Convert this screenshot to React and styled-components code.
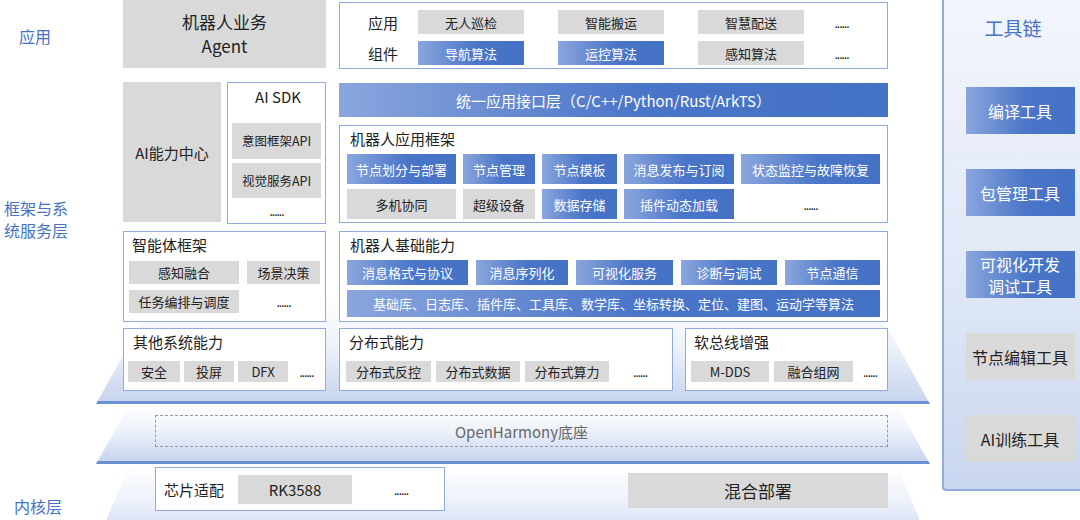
import React from "react";
import styled, { createGlobalStyle, css } from "styled-components";

const Global = createGlobalStyle`
  html, body { margin: 0; background: #fff; }
  body { font-family: "Noto Sans CJK SC", "Noto Sans", sans-serif; color: #222; }
`;

const blue = css`
  background: linear-gradient(90deg, #8aa6dd 0%, #4a75c8 55%, #4472c4 100%);
  color: #fff;
`;

const Canvas = styled.div`
  position: relative;
  width: 1080px;
  height: 520px;
  overflow: hidden;
`;

const Layer = styled.div`
  position: absolute;
  left: ${(p) => p.x}px;
  top: ${(p) => p.y}px;
  width: ${(p) => p.w}px;
  height: ${(p) => p.h}px;
`;

const Platform = styled(Layer)`
  background: linear-gradient(180deg, rgba(255, 255, 255, 0) 0%, #eef2fb 45%, #c8d5ef 100%);
  clip-path: polygon(${(p) => p.inset}px 0, calc(100% - ${(p) => p.inset}px) 0, 100% 100%, 0 100%);
  border-bottom: ${(p) => (p.line ? "3px solid #6d8fd3" : "none")};
  box-sizing: border-box;
`;

const SideLabel = styled(Layer)`
  color: #4472c4;
  font-size: 16px;
  line-height: 22px;
  text-align: center;
`;

const GrayBlock = styled(Layer)`
  background: #d9d9d9;
  display: flex;
  flex-direction: column;
  align-items: center;
  justify-content: center;
  font-size: ${(p) => p.fs || 16}px;
  line-height: 1.4;
`;

const Panel = styled(Layer)`
  box-sizing: border-box;
  background: #fff;
  border: 1.5px solid #8faadc;
  padding: ${(p) => p.pad || "4px 6px"};
  display: flex;
  flex-direction: column;
  gap: ${(p) => p.gap || 5}px;
`;

const Title = styled.div`
  font-size: 15px;
  line-height: 20px;
  padding-left: ${(p) => p.indent || 3}px;
  text-align: ${(p) => (p.center ? "center" : "left")};
`;

const Row = styled.div`
  display: flex;
  gap: ${(p) => p.gap || 6}px;
  align-items: center;
`;

const Chip = styled.div`
  flex: ${(p) => (p.w ? `0 0 ${p.w}px` : 1)};
  height: ${(p) => p.h || 24}px;
  display: flex;
  align-items: center;
  justify-content: center;
  font-size: ${(p) => p.fs || 13}px;
  white-space: nowrap;
  ${(p) => (p.blue ? blue : "background: #d9d9d9; color: #222;")}
`;

const Dots = styled.div`
  flex: ${(p) => (p.w ? `0 0 ${p.w}px` : 1)};
  text-align: center;
  font-size: 12px;
  letter-spacing: -1px;
`;

const Bar = styled(Layer)`
  ${blue};
  display: flex;
  align-items: center;
  justify-content: center;
  font-size: 15px;
`;

const Dashed = styled(Layer)`
  box-sizing: border-box;
  border: 1.5px dashed #999;
  display: flex;
  align-items: center;
  justify-content: center;
  color: #666;
  font-size: 15px;
`;

const ToolPanel = styled(Layer)`
  box-sizing: border-box;
  border-left: 2px solid #8faadc;
  border-bottom: 2px solid #8faadc;
  border-radius: 0 0 0 4px;
  background: linear-gradient(180deg, #f2f5fc 0%, #dfe7f6 60%, #c9d6ef 100%);
  display: flex;
  flex-direction: column;
  align-items: center;
  padding: 14px 0 0 14px;
  gap: 35px;
`;

const ToolTitle = styled.div`
  color: #4472c4;
  font-size: 19px;
  height: 38px;
  margin-bottom: 0;
  padding-right: 14px;
`;

const Tool = styled.div`
  width: 109px;
  height: 47px;
  display: flex;
  align-items: center;
  justify-content: center;
  text-align: center;
  font-size: 16px;
  line-height: 22px;
  ${(p) => (p.blue ? blue : "background: #d9d9d9; color: #222;")}
`;

const AppRow = styled(Row)`
  gap: 0;
`;

const AppLabel = styled.div`
  flex: 0 0 70px;
  text-align: center;
  font-size: 15px;
`;

export default function App() {
  return (
    <Canvas>
      <Global />
      <Platform x={96} y={300} w={834} h={104} inset={58} line />
      <Platform x={96} y={404} w={834} h={60} inset={34} line />
      <Platform x={96} y={464} w={834} h={80} inset={34} />

      <SideLabel x={0} y={25} w={70} h={24}>应用</SideLabel>
      <SideLabel x={0} y={197} w={72} h={46}>框架与系<br />统服务层</SideLabel>
      <SideLabel x={0} y={495} w={76} h={24}>内核层</SideLabel>

      <GrayBlock x={123} y={0} w={203} h={68} fs={17}>
        <div>机器人业务</div>
        <div>Agent</div>
      </GrayBlock>

      <Panel x={339} y={2} w={549} h={67} pad="7px 8px 3px 8px" gap={7}>
        <AppRow>
          <AppLabel>应用</AppLabel>
          <Chip w={106}>无人巡检</Chip><div style={{ width: 34 }} />
          <Chip w={106}>智能搬运</Chip><div style={{ width: 34 }} />
          <Chip w={106}>智慧配送</Chip>
          <Dots>......</Dots>
        </AppRow>
        <AppRow>
          <AppLabel>组件</AppLabel>
          <Chip w={106} blue>导航算法</Chip><div style={{ width: 34 }} />
          <Chip w={106} blue>运控算法</Chip><div style={{ width: 34 }} />
          <Chip w={106}>感知算法</Chip>
          <Dots>......</Dots>
        </AppRow>
      </Panel>

      <GrayBlock x={123} y={82} w={98} h={140} fs={15}>AI能力中心</GrayBlock>

      <Panel x={227} y={82} w={99} h={142} pad="4px 4px" gap={4}>
        <Title center indent={0}>AI SDK</Title>
        <div style={{ height: 8 }} />
        <Chip h={23} fs={12.5}>意图框架API</Chip>
        <Chip h={23} fs={12.5}>视觉服务API</Chip>
        <Dots style={{ flex: "none" }}>......</Dots>
      </Panel>

      <Bar x={339} y={83} w={549} h={34}>统一应用接口层（C/C++/Python/Rust/ArkTS）</Bar>

      <Panel x={339} y={125} w={549} h={98} pad="3px 7px" gap={5}>
        <Title>机器人应用框架</Title>
        <Row gap={7}>
          <Chip h={30} w={109} blue>节点划分与部署</Chip>
          <Chip h={30} w={72} blue>节点管理</Chip>
          <Chip h={30} w={75} blue>节点模板</Chip>
          <Chip h={30} w={110} blue>消息发布与订阅</Chip>
          <Chip h={30} blue>状态监控与故障恢复</Chip>
        </Row>
        <Row gap={7}>
          <Chip h={30} w={109}>多机协同</Chip>
          <Chip h={30} w={72}>超级设备</Chip>
          <Chip h={30} w={75} blue>数据存储</Chip>
          <Chip h={30} w={110} blue>插件动态加载</Chip>
          <Dots>......</Dots>
        </Row>
      </Panel>

      <Panel x={123} y={231} w={203} h={91} pad="3px 5px" gap={6}>
        <Title>智能体框架</Title>
        <Row gap={8}>
          <Chip h={23} w={110}>感知融合</Chip>
          <Chip h={23}>场景决策</Chip>
        </Row>
        <Row gap={8}>
          <Chip h={23} w={110}>任务编排与调度</Chip>
          <Dots>......</Dots>
        </Row>
      </Panel>

      <Panel x={339} y={231} w={549} h={91} pad="3px 7px" gap={5}>
        <Title>机器人基础能力</Title>
        <Row gap={8}>
          <Chip h={25} w={121} blue>消息格式与协议</Chip>
          <Chip h={25} w={92} blue>消息序列化</Chip>
          <Chip h={25} w={97} blue>可视化服务</Chip>
          <Chip h={25} w={96} blue>诊断与调试</Chip>
          <Chip h={25} blue>节点通信</Chip>
        </Row>
        <Chip h={27} blue style={{ flex: "none" }}>基础库、日志库、插件库、工具库、数学库、坐标转换、定位、建图、运动学等算法</Chip>
      </Panel>

      <Panel x={123} y={328} w={203} h={63} pad="3px 4px" gap={9}>
        <Title indent={5}>其他系统能力</Title>
        <Row gap={4}>
          <Chip h={21} w={52}>安全</Chip>
          <Chip h={21} w={50}>投屏</Chip>
          <Chip h={21} w={50}>DFX</Chip>
          <Dots>......</Dots>
        </Row>
      </Panel>

      <Panel x={339} y={328} w={334} h={63} pad="3px 6px" gap={9}>
        <Title>分布式能力</Title>
        <Row gap={5}>
          <Chip h={21} w={85}>分布式反控</Chip>
          <Chip h={21} w={84}>分布式数据</Chip>
          <Chip h={21} w={84}>分布式算力</Chip>
          <Dots>......</Dots>
        </Row>
      </Panel>

      <Panel x={685} y={328} w={203} h={63} pad="3px 5px" gap={9}>
        <Title>软总线增强</Title>
        <Row gap={5}>
          <Chip h={21} w={78}>M-DDS</Chip>
          <Chip h={21} w={79}>融合组网</Chip>
          <Dots>......</Dots>
        </Row>
      </Panel>

      <Dashed x={155} y={415} w={733} h={32}>OpenHarmony底座</Dashed>

      <Panel x={155} y={467} w={290} h={44} pad="6px 8px" gap={0}>
        <Row gap={14} style={{ height: "100%" }}>
          <div style={{ fontSize: 15 }}>芯片适配</div>
          <Chip h={29} w={114} fs={15}>RK3588</Chip>
          <Dots>......</Dots>
        </Row>
      </Panel>

      <GrayBlock x={628} y={473} w={260} h={35} fs={17}>混合部署</GrayBlock>

      <ToolPanel x={942} y={0} w={140} h={491}>
        <ToolTitle>工具链</ToolTitle>
        <Tool blue>编译工具</Tool>
        <Tool blue>包管理工具</Tool>
        <Tool blue>可视化开发<br />调试工具</Tool>
        <Tool>节点编辑工具</Tool>
        <Tool>AI训练工具</Tool>
      </ToolPanel>
    </Canvas>
  );
}
